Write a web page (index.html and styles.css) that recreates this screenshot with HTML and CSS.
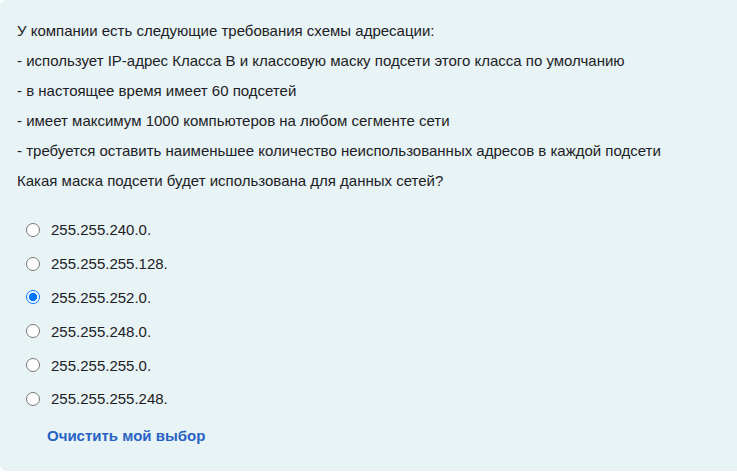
FILE: index.html
```html
<!DOCTYPE html>
<html lang="ru">
<head>
<meta charset="utf-8">
<title>Вопрос</title>
<link rel="stylesheet" href="styles.css">
</head>
<body>
<div class="panel">
  <div class="qtext">
    <p>У компании есть следующие требования схемы адресации:</p>
    <p>- использует IP-адрес Класса B и классовую маску подсети этого класса по умолчанию</p>
    <p>- в настоящее время имеет 60 подсетей</p>
    <p>- имеет максимум 1000 компьютеров на любом сегменте сети</p>
    <p>- требуется оставить наименьшее количество неиспользованных адресов в каждой подсети</p>
    <p>Какая маска подсети будет использована для данных сетей?</p>
  </div>
  <div class="answers">
    <label class="opt"><input type="radio" name="a"><span>255.255.240.0.</span></label>
    <label class="opt"><input type="radio" name="a"><span>255.255.255.128.</span></label>
    <label class="opt"><input type="radio" name="a" checked><span>255.255.252.0.</span></label>
    <label class="opt"><input type="radio" name="a"><span>255.255.248.0.</span></label>
    <label class="opt"><input type="radio" name="a"><span>255.255.255.0.</span></label>
    <label class="opt"><input type="radio" name="a"><span>255.255.255.248.</span></label>
  </div>
  <a class="clear" href="#">Очистить мой выбор</a>
</div>
</body>
</html>
```
FILE: styles.css
```css
html, body {
  margin: 0;
  padding: 0;
  background: #ffffff;
  overflow: hidden;
}
body {
  font-family: "Liberation Sans", Arial, sans-serif;
  font-size: 15px;
  color: #1d2125;
}
.panel {
  width: 760px;
  height: 471px;
  box-sizing: border-box;
  background: #e7f3f5;
  border-radius: 6px;
  padding: 16px 17px;
}
.qtext p {
  margin: 0;
  line-height: 30px;
}
.answers {
  margin-top: 17px;
  display: flex;
  flex-direction: column;
}
.opt {
  display: flex;
  align-items: center;
  height: 33.8px;
  padding-left: 9px;
}
.opt input {
  margin: 0 11px 0 0;
  width: 14px;
  height: 14px;
}
.clear {
  display: inline-block;
  margin-top: 9px;
  margin-left: 30px;
  line-height: 22px;
  font-weight: bold;
  font-size: 15px;
  color: #2a62c6;
  text-decoration: none;
}
```
